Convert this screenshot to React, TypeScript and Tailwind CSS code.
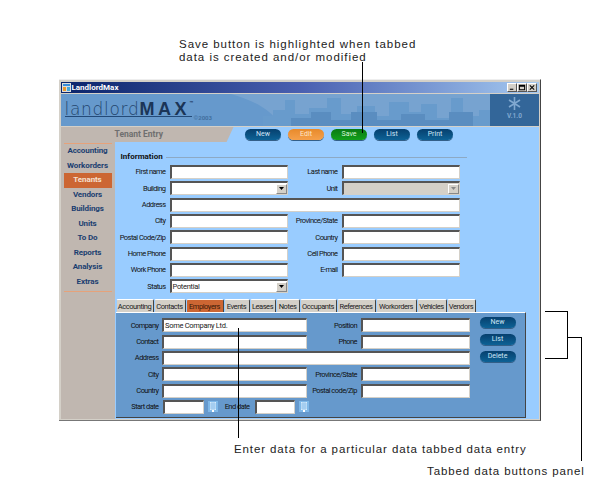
const Btn = ({ label, color = "navy", w = "w-[36px]" }: { label: string; color?: string; w?: string }) => {
  const cls =
    color === "orange"
      ? "bg-gradient-to-b from-[#e88a2a] to-[#f5a04a] text-[#ffe8c8]"
      : color === "green"
      ? "bg-gradient-to-b from-[#0a7a14] to-[#12a01c] text-[#d8f5d8]"
      : "bg-gradient-to-b from-[#07406e] to-[#0d6296] text-[#cfe6f7]";
  return (
    <div className={`${w} h-[11px] rounded-full ${cls} flex items-center justify-center text-[7px] leading-none shadow-[0_1px_0_#335f88]`}>
      {label}
    </div>
  );
};

const Input = ({ w, value, disabled, select }: { w: string; value?: string; disabled?: boolean; select?: boolean }) => (
  <div
    className={`${w} h-[14px] shrink-0 border-t-2 border-l-2 border-t-[#555] border-l-[#555] border-b border-r border-b-[#d4d0c8] border-r-[#d4d0c8] ${
      disabled ? "bg-[#d4d0c8]" : "bg-white"
    } flex items-center justify-between text-[7.5px] tracking-[-0.3px] leading-none text-[#222] pl-[1px]`}
  >
    <span>{value}</span>
    {select && (
      <div className="w-[11px] h-[10px] bg-[#d4d0c8] border border-[#888] border-t-white border-l-white flex items-center justify-center">
        <svg width="7" height="4" viewBox="0 0 7 4"><path d="M1 0h5L3.5 3z" fill={disabled ? "#888" : "#000"} /></svg>
      </div>
    )}
  </div>
);

const Label = ({ text, w }: { text: string; w: string }) => (
  <div className={`${w} shrink-0 flex justify-end text-[7.5px] tracking-[-0.55px] leading-none whitespace-nowrap`}>{text}</div>
);

const Row = ({ children }: { children: React.ReactNode }) => (
  <div className="flex items-center h-[14px] mb-[2.33px]">{children}</div>
);

const Cal = () => (
  <svg width="10" height="11" viewBox="0 0 10 11" className="shrink-0">
    <rect width="10" height="11" fill="#7fb8e8" />
    <rect x="2" y="1" width="6" height="8" fill="#d8ecfb" />
    <path d="M4 1v8M6 1v8M2 3h6M2 5h6M2 7h6" stroke="#7fb8e8" strokeWidth="0.7" />
    <rect x="4" y="9" width="2" height="2" fill="#fff" />
  </svg>
);

const nav = ["Accounting", "Workorders", "Tenants", "Vendors", "Buildings", "Units", "To Do", "Reports", "Analysis", "Extras"];
const tabs = [
  { t: "Accounting", w: "w-[38px]" },
  { t: "Contacts", w: "w-[32px]" },
  { t: "Employers", w: "w-[38px]" },
  { t: "Events", w: "w-[26px]" },
  { t: "Leases", w: "w-[26px]" },
  { t: "Notes", w: "w-[24px]" },
  { t: "Occupants", w: "w-[37px]" },
  { t: "References", w: "w-[39px]" },
  { t: "Workorders", w: "w-[41px]" },
  { t: "Vehicles", w: "w-[30px]" },
  { t: "Vendors", w: "w-[29px]" },
];

export default function App() {
  return (
    <div className="relative w-[600px] h-[500px] bg-white overflow-hidden font-['Roboto',sans-serif] text-[#111]">
      {/* annotations */}
      <div className="absolute left-[179px] top-[38px] font-['Liberation_Sans',sans-serif] text-[11.5px] leading-[13px] tracking-[0.96px] text-[#222] whitespace-nowrap">
        Save button is highlighted when tabbed
        <br />
        data is created and/or modified
      </div>
      <div className="absolute left-[234px] top-[443px] font-['Liberation_Sans',sans-serif] text-[11.5px] leading-[13px] tracking-[0.89px] text-[#222] whitespace-nowrap">
        Enter data for a particular data tabbed data entry
      </div>
      <div className="absolute left-[427px] top-[465px] font-['Liberation_Sans',sans-serif] text-[11.5px] leading-[13px] tracking-[0.89px] text-[#222] whitespace-nowrap">
        Tabbed data buttons panel
      </div>

      {/* window */}
      <div className="absolute left-[59px] top-[79px] w-[482px] h-[342px] bg-[#d4d0c8] border-t border-t-[#eee] border-r border-r-[#444] border-b border-b-[#777] pl-[1.5px] pt-[2px] pr-[1px] pb-[1px] flex flex-col">
        <div className="h-[11px] shrink-0 bg-gradient-to-r from-[#0a246a] via-[#4a5fb0] to-[#a6caf0] flex items-center justify-between pl-[1px] pr-[2px]">
          <div className="flex items-center gap-[1px]">
            <svg width="9" height="9" viewBox="0 0 9 9"><rect width="9" height="9" fill="#ddd" /><rect x="1" y="1" width="7" height="2" fill="#3a8fd8" /><rect x="1" y="4" width="3" height="4" fill="#e89a30" /><rect x="5" y="4" width="3" height="4" fill="#48a8d8" /></svg>
            <span className="text-[8px] font-bold leading-none text-white">LandlordMax</span>
          </div>
          <div className="flex">
            {["M2 6h4", "M1.500 1.500h6v5h-6zM1.500 2.500h6", "M2 1.500l5 5M7 1.500l-5 5"].map((d) => (
              <div key={d} className="w-[10px] h-[9px] bg-[#d4d0c8] border border-[#555] border-t-white border-l-white flex items-center justify-center">
                <svg width="8" height="7" viewBox="0 0 9 8"><path d={d} fill="none" stroke="#000" strokeWidth="1.200" /></svg>
              </div>
            ))}
          </div>
        </div>

        <div className="h-[32px] mt-[1px] shrink-0 bg-[#6699cc] relative flex overflow-hidden">
          <svg className="absolute left-[170px] top-0" width="270" height="32" viewBox="0 0 270 32">
            <path d="M0 0C20 6 40 14 50 32H270V0z" fill="#77a3d0" />
            <path d="M32 32V22h10v-6h12V6h10v14h14v-6h18V4h14v16h16v-8h18v10h14V8h20v10h12v-8h16v14h14V4h12v18h16v-6h14v16z" fill="#689bcc" />
            <path d="M60 32v-8h20v-6h20v8h20v-8h26v8h24v-6h24v6h24v-8h24v14z" fill="#5a8dc0" />
          </svg>
          <div className="relative w-[428px] pl-[4px]">
            <div className="flex items-baseline leading-none mt-[6px] h-[17px] border-b border-b-[#234a78] w-[127px]">
              <span className="text-[17px] tracking-[0.7px] text-[#24466e] font-['DejaVu_Sans',sans-serif] font-extralight leading-none">landlord</span>
              <span className="text-[18px] tracking-[3.600px] font-['Liberation_Sans',sans-serif] font-bold text-[#1b3557] leading-none">MAX</span>
            </div>
            <span className="absolute left-[129px] top-[6px] text-[6px] font-bold text-[#1b3557] leading-none">™</span>
            <span className="absolute left-[133px] top-[21px] text-[6px] leading-none text-[#42709f] font-bold">©2003</span>
          </div>
          <div className="relative ml-auto w-[49px] bg-[#336699] flex flex-col items-center pt-[2px]">
            <svg width="15" height="15" viewBox="0 0 15 15"><path d="M7.500 1v13M2 4l11 7M13 4L2 11" stroke="#80a8d0" strokeWidth="1.600" /></svg>
            <span className="text-[6.5px] font-bold leading-none mt-[2px] text-[#80a8d0]">V.1.0</span>
          </div>
        </div>

        <div className="flex-1 min-h-0 mt-[1px] bg-[#99ccff] flex flex-col">
          <div className="h-[15px] shrink-0 flex items-center relative">
            <div className="absolute left-0 top-0 w-[173px] h-[15px] bg-[#c0b7b0] [clip-path:polygon(0_0,100%_0,96%_100%,0_100%)]" />
            <div className="relative w-[184.500px] pl-[54px] text-[8.500px] font-bold text-[#6f6f6f]">Tenant Entry</div>
            <div className="relative flex gap-[7px]">
              <Btn label="New" />
              <Btn label="Edit" color="orange" />
              <Btn label="Save" color="green" />
              <Btn label="List" />
              <Btn label="Print" />
            </div>
          </div>

          <div className="flex-1 min-h-0 flex">
            <div className="w-[54px] shrink-0 bg-[#c0b7b0] px-[3px] pt-[1px]">
              <div className="h-[1px] bg-[#e6a27a]" />
              <div>
                {nav.map((n) => (
                  <div
                    key={n}
                    className={`h-[14.5px] flex items-center justify-center text-[8px] font-bold leading-none tracking-[-0.1px] ${
                      n === "Tenants" ? "bg-[#cc6633] text-[#f5e0d0]" : "text-[#1c3f70]"
                    }`}
                  >
                    {n}
                  </div>
                ))}
              </div>
              <div className="h-[1px] bg-[#e6a27a] mt-[2px]" />
            </div>

            <div className="flex-1 min-w-0 pl-[1px] pt-[10px]">
              <div className="flex items-center pl-[5px] w-[351px] h-[10px] mb-[3px]">
                <span className="text-[8px] font-bold leading-none text-[#111]">Information</span>
                <div className="flex-1 h-[1px] bg-[#8da9c4] ml-[3px]" />
              </div>
              <Row><Label text="First name" w="w-[50px]" /><span className="w-[4px]" /><Input w="w-[118px]" /><Label text="Last name" w="w-[50px]" /><span className="w-[4px]" /><Input w="w-[118px]" /></Row>
              <Row><Label text="Building" w="w-[50px]" /><span className="w-[4px]" /><Input w="w-[118px]" select /><Label text="Unit" w="w-[50px]" /><span className="w-[4px]" /><Input w="w-[118px]" disabled select /></Row>
              <Row><Label text="Address" w="w-[50px]" /><span className="w-[4px]" /><Input w="w-[290px]" /></Row>
              <Row><Label text="City" w="w-[50px]" /><span className="w-[4px]" /><Input w="w-[118px]" /><Label text="Province/State" w="w-[50px]" /><span className="w-[4px]" /><Input w="w-[118px]" /></Row>
              <Row><Label text="Postal Code/Zip" w="w-[50px]" /><span className="w-[4px]" /><Input w="w-[118px]" /><Label text="Country" w="w-[50px]" /><span className="w-[4px]" /><Input w="w-[118px]" /></Row>
              <Row><Label text="Home Phone" w="w-[50px]" /><span className="w-[4px]" /><Input w="w-[118px]" /><Label text="Cell Phone" w="w-[50px]" /><span className="w-[4px]" /><Input w="w-[118px]" /></Row>
              <Row><Label text="Work Phone" w="w-[50px]" /><span className="w-[4px]" /><Input w="w-[118px]" /><Label text="E-mail" w="w-[50px]" /><span className="w-[4px]" /><Input w="w-[118px]" /></Row>
              <Row><Label text="Status" w="w-[50px]" /><span className="w-[4px]" /><Input w="w-[118px]" value="Potential" select /></Row>

              <div className="flex h-[13px] mt-[6px] relative">
                {tabs.map(({ t, w }) => (
                  <div
                    key={t}
                    className={`${w} h-[13px] flex items-center justify-center whitespace-nowrap text-[7.5px] tracking-[-0.45px] leading-none rounded-t-[2px] border-r border-r-[#444] border-l border-l-[#99ccff] border-t border-t-white ${
                      t === "Employers" ? "bg-[#cc6633] text-[#3a1a08]" : "bg-[#d4d0c8] text-[#222]"
                    }`}
                  >
                    {t}
                  </div>
                ))}
              </div>
              <div className="w-[410px] h-[106px] bg-[#6699cc] border-t border-t-white border-r border-r-[#444] border-b border-b-[#444] pt-[5px] flex">
                <div className="w-[354px] shrink-0">
                  <Row><Label text="Company" w="w-[43px]" /><span className="w-[4px]" /><Input w="w-[145px]" value="Some Company Ltd." /><Label text="Position" w="w-[50px]" /><span className="w-[4px]" /><Input w="w-[109px]" /></Row>
                  <Row><Label text="Contact" w="w-[43px]" /><span className="w-[4px]" /><Input w="w-[145px]" /><Label text="Phone" w="w-[50px]" /><span className="w-[4px]" /><Input w="w-[109px]" /></Row>
                  <Row><Label text="Address" w="w-[43px]" /><span className="w-[4px]" /><Input w="w-[308px]" /></Row>
                  <Row><Label text="City" w="w-[43px]" /><span className="w-[4px]" /><Input w="w-[145px]" /><Label text="Province/State" w="w-[50px]" /><span className="w-[4px]" /><Input w="w-[109px]" /></Row>
                  <Row><Label text="Country" w="w-[43px]" /><span className="w-[4px]" /><Input w="w-[145px]" /><Label text="Postal code/Zip" w="w-[50px]" /><span className="w-[4px]" /><Input w="w-[109px]" /></Row>
                  <Row>
                    <Label text="Start date" w="w-[43px]" /><span className="w-[4px]" /><Input w="w-[41px]" /><span className="w-[4px]" /><Cal />
                    <Label text="End date" w="w-[32px]" /><span className="w-[5px]" /><Input w="w-[40px]" /><span className="w-[4px]" /><Cal />
                  </Row>
                </div>
                <div className="flex flex-col gap-[6px] pl-[10px] -mt-[1px]">
                  <Btn label="New" />
                  <Btn label="List" />
                  <Btn label="Delete" />
                </div>
              </div>
            </div>
          </div>
        </div>
      </div>

      {/* leader lines */}
      <div className="absolute left-[362px] top-[62px] w-[1px] h-[71px] bg-black" />
      <div className="absolute left-[238px] top-[328px] w-[1px] h-[110px] bg-black" />
      <div className="absolute left-[545px] top-[311px] w-[23px] h-[48px] border-t border-r border-b border-black" />
      <div className="absolute left-[567px] top-[337px] w-[14px] h-[1px] bg-black" />
      <div className="absolute left-[581px] top-[337px] w-[1px] h-[124px] bg-black" />
    </div>
  );
}
